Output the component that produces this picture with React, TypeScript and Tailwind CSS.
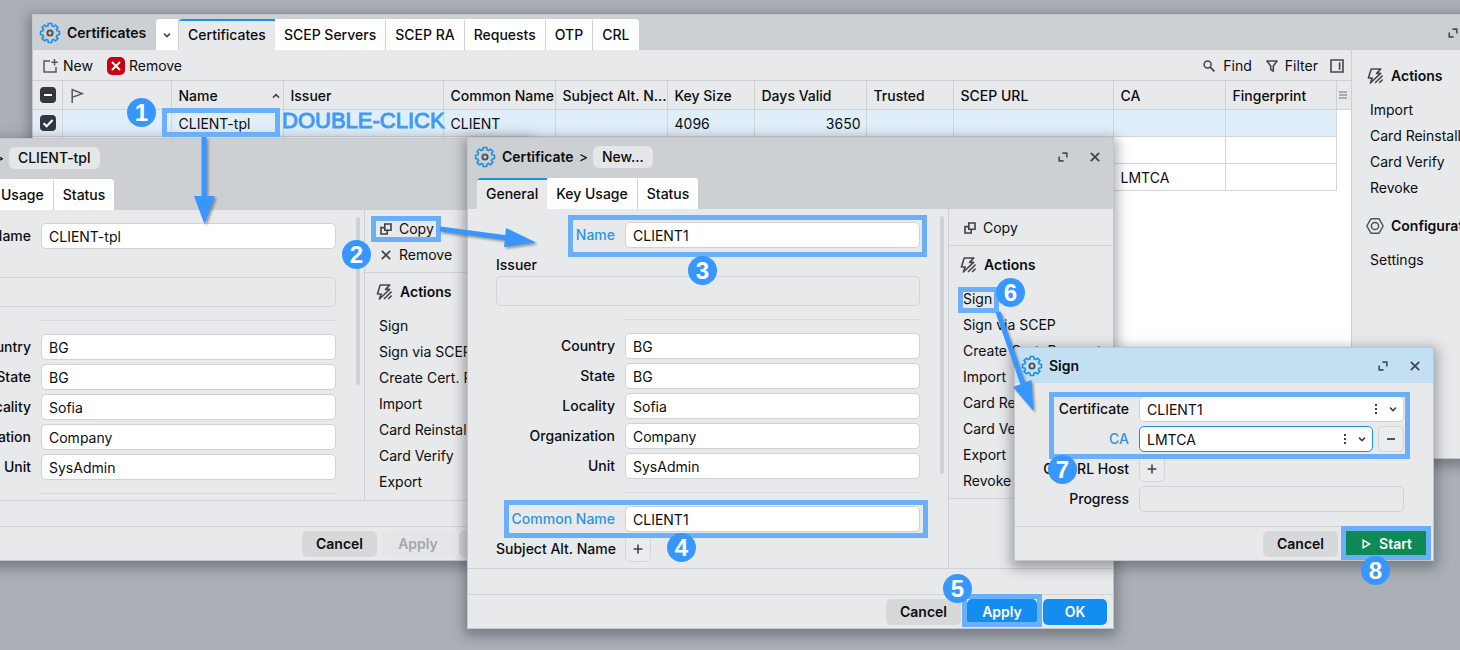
import React from 'react';
import type { ReactNode } from 'react';

type IconProps = { className?: string };

function GearIcon({ className = '' }: IconProps) {
  const teeth = 8;
  const pts: string[] = [];
  for (let i = 0; i < teeth; i++) {
    const a = (i * 2 * Math.PI) / teeth - Math.PI / 2;
    const at = (r: number, d: number) =>
      `${(11 + r * Math.cos(a + d)).toFixed(2)} ${(11 + r * Math.sin(a + d)).toFixed(2)}`;
    pts.push(at(7.4, -0.27), at(9.6, -0.19), at(9.6, 0.19), at(7.4, 0.27));
  }
  return (
    <svg viewBox="0 0 22 22" className={`size-[22px] shrink-0 ${className}`} fill="none" aria-hidden="true">
      <path d={`M${pts.join('L')}Z`} stroke="#1c8fe8" strokeWidth="1.6" strokeLinejoin="round" />
      <circle cx="11" cy="11" r="2.6" stroke="#4b5057" strokeWidth="1.9" />
    </svg>
  );
}

function BoltIcon() {
  return (
    <svg viewBox="0 0 16 16" className="size-4 shrink-0" fill="none" stroke="#44484d" strokeWidth="1.6" aria-hidden="true">
      <path d="M4.2 1h9.600L9.600 5.400h4L3.400 15l1.800-5H1.400Z" strokeLinejoin="round" />
      <path d="M15.600 7.600 8 15M15.600 11.600 12.200 15" />
    </svg>
  );
}

function HexIcon() {
  return (
    <svg viewBox="0 0 18 18" className="-mr-px -ml-px size-[18px] shrink-0" fill="none" stroke="#4b5563" strokeWidth="1.5" aria-hidden="true">
      <path d="M4.9 1.8h8.2L17.2 9l-4.1 7.2H4.9L.8 9Z" strokeLinejoin="round" />
      <circle cx="9" cy="9" r="3.6" />
    </svg>
  );
}

function CopyIcon() {
  return (
    <svg viewBox="0 0 12 12" className="size-3 shrink-0" fill="none" stroke="#3f4347" strokeWidth="1.6" aria-hidden="true">
      <path d="M4.8 1h6.2v6.2H4.8Z" />
      <path d="M4.8 4.6H1V11h6.2V7.2" />
    </svg>
  );
}

function CrossIcon() {
  return (
    <svg viewBox="0 0 10 10" className="size-[10px] shrink-0" stroke="#3f4347" strokeWidth="1.7" aria-hidden="true">
      <path d="m.8.8 8.4 8.4M9.2.8.8 9.2" />
    </svg>
  );
}

function MaximizeIcon() {
  return (
    <svg viewBox="0 0 10 10" className="size-[10px] shrink-0" fill="none" stroke="#4b5057" strokeWidth="1.7" aria-hidden="true">
      <path d="M4.4 1.2h4.4v4.4M1.2 4.4v4.4h4.4" />
    </svg>
  );
}

function Chevron({ up = false }: { up?: boolean }) {
  return (
    <svg viewBox="0 0 8 8" className="size-2 shrink-0" fill="none" stroke="#3f4347" strokeWidth="1.5" aria-hidden="true">
      <path d={up ? 'M1 5.6 4 2.6l3 3' : 'm1 2.6 3 3 3-3'} />
    </svg>
  );
}

function PlusIcon() {
  return (
    <svg viewBox="0 0 10 10" className="size-[10px]" stroke="#3f4347" strokeWidth="1.6" aria-hidden="true">
      <path d="M5 .6v8.8M.6 5h8.8" />
    </svg>
  );
}

function MinusIcon() {
  return (
    <svg viewBox="0 0 10 10" className="size-[10px]" stroke="#3f4347" strokeWidth="1.8" aria-hidden="true">
      <path d="M1 5h8" />
    </svg>
  );
}

const windowClass =
  'absolute flex flex-col overflow-hidden border border-[#c3c7cb] bg-[#e7e9eb] shadow-[0_4px_12px_3px_rgba(40,45,55,0.4)]';

function WindowButtons() {
  return (
    <div className="ml-auto flex items-center gap-[22px] pr-[13px]">
      <button type="button" aria-label="Maximize"><MaximizeIcon /></button>
      <button type="button" aria-label="Close"><CrossIcon /></button>
    </div>
  );
}

function Tabs({ items, active }: { items: string[]; active: string }) {
  return (
    <div role="tablist" className="flex h-[31px] overflow-hidden rounded-t">
      {items.map((t) => (
        <button
          key={t}
          type="button"
          role="tab"
          aria-selected={t === active}
          className={
            t === active
              ? 'border-t-2 border-t-[#1c8fe0] bg-[#e7e9eb] px-[9px] pb-0.5 font-medium'
              : 'border-t-2 border-r border-[#d0d3d6] border-t-white bg-white px-[9px] pb-0.5 font-medium last:border-r-0'
          }
        >
          {t}
        </button>
      ))}
    </div>
  );
}

function SideHeading({ icon, children }: { icon: ReactNode; children: ReactNode }) {
  return (
    <h2 className="mb-0.5 flex h-[38px] items-center gap-2 font-semibold whitespace-nowrap">
      {icon}
      {children}
    </h2>
  );
}

function SideItems({ items }: { items: string[] }) {
  return (
    <ul className="pb-1">
      {items.map((t) => (
        <li key={t}>
          <button type="button" className="block h-[26px] px-[3px] whitespace-nowrap">{t}</button>
        </li>
      ))}
    </ul>
  );
}

const fieldClass = 'h-[26px] w-full min-w-0 rounded-[5px] border border-[#d0d3d6] bg-white px-[7px]';

function Field({ id, label, value, blue = false }: { id: string; label: string; value: string; blue?: boolean }) {
  return (
    <div className="grid grid-cols-[119px_1fr] items-center gap-[10px]">
      <label htmlFor={id} className={blue ? 'text-right font-medium whitespace-nowrap text-[#2b95e6]' : 'text-right font-medium whitespace-nowrap'}>
        {label}
      </label>
      <input id={id} type="text" defaultValue={value} className={fieldClass} />
    </div>
  );
}

function SquareButton({ label, children }: { label: string; children: ReactNode }) {
  return (
    <button type="button" aria-label={label} className="flex size-[26px] shrink-0 items-center justify-center rounded-[5px] border border-[#d3d6d9] bg-[#ebecee]">
      {children}
    </button>
  );
}

type CertWindowProps = {
  id: string;
  crumb: string;
  name: string;
  commonName: string;
  edited?: boolean;
  place: string;
  bodyHeight: string;
  thumb: string;
};

function CertificateWindow({ id, crumb, name, commonName, edited = false, place, bodyHeight, thumb }: CertWindowProps) {
  return (
    <section className={`${windowClass} ${place}`} aria-label={`Certificate ${crumb}`}>
      <header className="bg-[#cdd0d3]">
        <div className="mb-[3px] flex h-[37px] items-center pl-1.5">
          <GearIcon />
          <span className="ml-1.5 font-semibold">Certificate</span>
          <span className="mx-[5px]">&gt;</span>
          <span className="rounded-md bg-[#e4e6e8] px-[9px] leading-[22px] font-medium">{crumb}</span>
          <WindowButtons />
        </div>
        <div className="flex px-[9px]">
          <Tabs items={['General', 'Key Usage', 'Status']} active="General" />
        </div>
      </header>
      <div className={`flex overflow-hidden ${bodyHeight}`}>
        <form className="flex min-w-0 flex-1 flex-col pt-[13px] pl-7">
          <div className="flex flex-1">
            <div className="flex-1">
              <Field id={`${id}-name`} label="Name" value={name} blue={edited} />
              <label htmlFor={`${id}-issuer`} className="mt-[7px] block h-5 font-medium">Issuer</label>
              <input id={`${id}-issuer`} type="text" readOnly className="mt-px block h-[30px] w-full rounded-[5px] border border-[#d3d6d9] bg-transparent px-2" />
              <hr className="my-[13px] ml-[128px] border-[#d6d9dc]" />
              <div className="flex flex-col gap-1">
                <Field id={`${id}-country`} label="Country" value="BG" />
                <Field id={`${id}-state`} label="State" value="BG" />
                <Field id={`${id}-locality`} label="Locality" value="Sofia" />
                <Field id={`${id}-org`} label="Organization" value="Company" />
                <Field id={`${id}-unit`} label="Unit" value="SysAdmin" />
              </div>
              <hr className="my-[13px] ml-[128px] border-[#d6d9dc]" />
              <div className="flex flex-col gap-1">
                <Field id={`${id}-cn`} label="Common Name" value={commonName} blue={edited} />
                <div className="grid grid-cols-[119px_1fr] items-center gap-[10px]">
                  <span className="text-right font-medium whitespace-nowrap">Subject Alt. Name</span>
                  <SquareButton label="Add subject alternative name"><PlusIcon /></SquareButton>
                </div>
              </div>
            </div>
            <div className="-mt-1.5 ml-5 w-2">
              <div className={`w-1 rounded-full bg-[#cfd2d5] ${thumb}`} />
            </div>
          </div>
        </form>
        <aside className="w-[165px] shrink-0 border-l border-[#cdd1d4]">
          <div className="border-b border-[#d0d3d6] pt-1.5 pb-1 pl-[15px]">
            <button type="button" className="flex h-[26px] items-center gap-[7px]"><CopyIcon />Copy</button>
            {!edited && (
              <button type="button" className="flex h-[26px] items-center gap-2 pl-px"><CrossIcon />Remove</button>
            )}
          </div>
          <div className="border-b border-[#d0d3d6] pl-[11px]">
            <SideHeading icon={<BoltIcon />}>Actions</SideHeading>
            <SideItems items={['Sign', 'Sign via SCEP', 'Create Cert. Request', 'Import', 'Card Reinstall', 'Card Verify', 'Export', 'Revoke']} />
          </div>
        </aside>
      </div>
      <div className="h-[26px] border-t border-[#d0d3d6]" />
      <footer className="flex h-[34px] items-center justify-end gap-1.5 border-t border-[#d0d3d6] pr-1.5">
        <button type="button" className="h-[26px] w-[75px] rounded-[5px] bg-[#d6d8da] font-semibold">Cancel</button>
        {edited ? (
          <>
            <button type="button" className="h-[26px] w-[70px] rounded-[5px] bg-[#148df0] font-semibold text-white">Apply</button>
            <button type="button" className="h-[26px] w-16 rounded-[5px] bg-[#148df0] font-semibold text-white">OK</button>
          </>
        ) : (
          <>
            <button type="button" disabled className="h-[26px] w-[70px] rounded-[5px] bg-[#e4e6e8] font-semibold text-[#a4a7aa]">Apply</button>
            <button type="button" disabled className="h-[26px] w-16 rounded-[5px] bg-[#d6d8da] font-semibold text-[#a4a7aa]">OK</button>
          </>
        )}
      </footer>
    </section>
  );
}

const columns: { title: string; width: string }[] = [
  { title: 'Name', width: 'w-[112px]' },
  { title: 'Issuer', width: 'w-[160px]' },
  { title: 'Common Name', width: 'w-[112px]' },
  { title: 'Subject Alt. N...', width: 'w-[112px]' },
  { title: 'Key Size', width: 'w-[87px]' },
  { title: 'Days Valid', width: 'w-[112px]' },
  { title: 'Trusted', width: 'w-[87px]' },
  { title: 'SCEP URL', width: 'w-[160px]' },
  { title: 'CA', width: 'w-[112px]' },
  { title: 'Fingerprint', width: 'w-[111px]' },
];

const rows: string[][] = [
  ['CLIENT-tpl', '', 'CLIENT', '', '4096', '3650', '', '', '', ''],
  ['', '', '', '', '', '', '', '', '', ''],
  ['', '', '', '', '', '', '', '', 'LMTCA', ''],
];

function CertificatesWindow() {
  return (
    <section className={`${windowClass} top-[14px] right-[-44px] left-8 min-h-[445px]`} aria-label="Certificates">
      <header className="flex h-[35px] bg-[#cdd0d3]">
        <div className="flex w-[123px] items-center pl-1.5">
          <GearIcon />
          <span className="ml-1.5 font-semibold">Certificates</span>
        </div>
        <div className="mt-1 flex">
          <button type="button" aria-label="More tabs" className="flex w-[23px] items-center justify-center rounded-tl border-r border-[#d0d3d6] bg-white">
            <Chevron />
          </button>
          <Tabs items={['Certificates', 'SCEP Servers', 'SCEP RA', 'Requests', 'OTP', 'CRL']} active="Certificates" />
        </div>
        <WindowButtons />
      </header>
      <div className="flex flex-1">
        <div className="flex min-w-0 flex-1 flex-col">
          <div className="flex h-[30px] items-center pt-0.5 pl-[10px]">
            <button type="button" className="flex items-center gap-[5px]">
              <svg viewBox="0 0 15 14" className="h-[14px] w-[15px]" fill="none" stroke="#55595e" strokeWidth="1.5" aria-hidden="true">
                <path d="M7 2H1v11h12V8" />
                <path d="M11.500 0v6.400M8.300 3.200h6.400" />
              </svg>
              New
            </button>
            <button type="button" className="ml-[14px] flex items-center gap-1">
              <svg viewBox="0 0 18 18" className="size-[18px]" aria-hidden="true">
                <rect width="18" height="18" rx="5" fill="#c8000f" />
                <path d="m5 5 8 8m0-8-8 8" stroke="#fff" strokeWidth="2" />
              </svg>
              Remove
            </button>
            <div className="ml-auto flex items-center pr-[7px]">
              <button type="button" className="flex items-center gap-2">
                <svg viewBox="0 0 12 12" className="size-3" fill="none" stroke="#44484d" strokeWidth="1.5" aria-hidden="true">
                  <circle cx="4.6" cy="4.6" r="3.5" />
                  <path d="m7.2 7.2 4.2 4.2" strokeWidth="1.8" />
                </svg>
                Find
              </button>
              <button type="button" className="ml-[14px] flex items-center gap-[7px]">
                <svg viewBox="0 0 12 12" className="size-3" fill="none" stroke="#44484d" strokeWidth="1.6" aria-hidden="true">
                  <path d="M1 1h10L7.3 6v5.200L4.700 9.600V6Z" strokeLinejoin="round" />
                </svg>
                Filter
              </button>
              <button type="button" aria-label="Toggle panel" className="ml-3">
                <svg viewBox="0 0 14 14" className="size-[14px]" fill="none" stroke="#44484d" strokeWidth="1.6" aria-hidden="true">
                  <path d="M1 1h12v12H1ZM9.600 3.200v7.600" />
                </svg>
              </button>
            </div>
          </div>
          <div className="flex-1 bg-white">
            <table className="w-full table-fixed border-collapse text-left">
              <thead>
                <tr className="h-[29px] bg-[#e7e9eb]">
                  <th className="w-[29px] border-y border-r border-[#cdd1d4] p-0">
                    <button type="button" aria-label="Clear selection" className="ml-[7px] flex size-4 items-center justify-center rounded bg-[#33383e]">
                      <span className="h-0.5 w-2 bg-white" />
                    </button>
                  </th>
                  <th className="w-[109px] border border-[#cdd1d4] p-0" aria-label="Flags">
                    <svg viewBox="0 0 13 15" className="ml-2 h-[15px] w-[13px]" fill="none" stroke="#55595e" strokeWidth="1.5" aria-hidden="true">
                      <path d="M1.200 15V1.600L11 5.600 1.200 9.400" />
                    </svg>
                  </th>
                  {columns.map((c) => (
                    <th key={c.title} className={`${c.width} border border-[#cdd1d4] p-0 pt-0.5 pl-[7px] font-medium`}>
                      <span className="flex items-center">
                        <span className="min-w-0 flex-1 whitespace-nowrap">{c.title}</span>
                        {c.title === 'Name' && <span className="pr-[3px]"><Chevron up /></span>}
                      </span>
                    </th>
                  ))}
                  <th className="border-y border-[#cdd1d4] p-0" aria-label="Columns">
                    <svg viewBox="0 0 8 8" className="ml-[2px] size-2" stroke="#6b7075" strokeWidth="1.2" aria-hidden="true">
                      <path d="M0 1h8M0 4h8M0 7h8" />
                    </svg>
                  </th>
                </tr>
              </thead>
              <tbody>
                {rows.map((r, i) => (
                  <tr key={i} className={i === 0 ? 'h-[27px] bg-[#e0eef9]' : 'h-[27px] bg-white'}>
                    <td className="border-r border-b border-[#d2d6d9] p-0">
                      {i === 0 && (
                        <span className="ml-[7px] flex">
                          <input type="checkbox" defaultChecked aria-label="Select CLIENT-tpl" className="size-4 appearance-none rounded bg-[#33383e]" />
                          <svg viewBox="0 0 16 16" className="pointer-events-none -ml-4 size-4" fill="none" stroke="#fff" strokeWidth="2" aria-hidden="true">
                            <path d="m3.600 8.200 3 3 6-6.200" />
                          </svg>
                        </span>
                      )}
                    </td>
                    <td className="border border-t-0 border-[#d2d6d9] p-0" />
                    {r.map((v, j) => (
                      <td key={j} className={j === 5 ? 'border border-t-0 border-[#d2d6d9] p-0 pt-0.5 pr-[5px] text-right' : 'border border-t-0 border-[#d2d6d9] p-0 pt-0.5 pl-[7px]'}>
                        {v}
                      </td>
                    ))}
                    <td className="bg-white p-0" />
                  </tr>
                ))}
              </tbody>
            </table>
          </div>
        </div>
        <aside className="flex w-[152px] shrink-0 flex-col gap-0.5 border-l border-[#cdd1d4] pt-[7px] pl-[15px]">
          <div>
            <SideHeading icon={<BoltIcon />}>Actions</SideHeading>
            <SideItems items={['Import', 'Card Reinstall', 'Card Verify', 'Revoke']} />
          </div>
          <div>
            <SideHeading icon={<HexIcon />}>Configuration</SideHeading>
            <SideItems items={['Settings']} />
          </div>
        </aside>
      </div>
    </section>
  );
}

function Combo({ id, value, focused = false }: { id: string; value: string; focused?: boolean }) {
  return (
    <div className={focused ? 'flex h-[26px] min-w-0 flex-1 items-center rounded-[5px] border border-[#1c8fe0] bg-white pr-[6px]' : 'flex h-[26px] min-w-0 flex-1 items-center rounded-[5px] border border-[#d0d3d6] bg-white pr-[6px]'}>
      <select id={id} defaultValue={value} className="h-full min-w-0 flex-1 appearance-none bg-transparent pt-0.5 pr-2 pl-[7px]">
        <option>{value}</option>
      </select>
      <svg viewBox="0 0 4 12" className="mr-[11px] h-3 w-1" fill="#3f4347" aria-hidden="true">
        <path d="M1 1h2v2H1ZM1 5h2v2H1ZM1 9h2v2H1Z" />
      </svg>
      <Chevron />
    </div>
  );
}

function SignWindow() {
  return (
    <section className={`${windowClass} top-[347px] left-[1014px] w-[420px]`} aria-label="Sign">
      <header className="flex h-[35px] items-center bg-[#c3e0f3] pl-1.5">
        <GearIcon />
        <span className="ml-1.5 font-semibold">Sign</span>
        <WindowButtons />
      </header>
      <form className="flex flex-col gap-1 pt-[13px] pr-[29px] pb-[14px] pl-6">
        <div className="flex items-center gap-[10px]">
          <label htmlFor="sign-cert" className="w-[90px] text-right font-medium">Certificate</label>
          <Combo id="sign-cert" value="CLIENT1" />
        </div>
        <div className="flex items-center gap-[10px]">
          <label htmlFor="sign-ca" className="w-[90px] text-right font-medium text-[#2b95e6]">CA</label>
          <div className="flex min-w-0 flex-1 gap-[5px]">
            <Combo id="sign-ca" value="LMTCA" focused />
            <SquareButton label="Remove CA"><MinusIcon /></SquareButton>
          </div>
        </div>
        <div className="flex items-center gap-[10px]">
          <span className="w-[90px] text-right font-medium whitespace-nowrap">CA CRL Host</span>
          <SquareButton label="Add CRL host"><PlusIcon /></SquareButton>
        </div>
        <div className="flex items-center gap-[10px]">
          <label htmlFor="sign-progress" className="w-[90px] text-right font-medium">Progress</label>
          <input id="sign-progress" type="text" readOnly className="h-[26px] min-w-0 flex-1 rounded-[5px] border border-[#d0d3d6] bg-transparent px-2" />
        </div>
      </form>
      <footer className="flex h-[34px] items-center justify-end gap-2 border-t border-[#d0d3d6] pr-[7px]">
        <button type="button" className="h-[26px] w-[75px] rounded-[5px] bg-[#d6d8da] font-semibold">Cancel</button>
        <button type="button" className="flex h-[26px] w-20 items-center justify-center gap-2 bg-[#0d8a56] pl-0.5 font-semibold text-white">
          <svg viewBox="0 0 9 10" className="h-[10px] w-[9px]" fill="none" stroke="#fff" strokeWidth="1.5" aria-hidden="true">
            <path d="M1.200 1.200 7.600 5 1.200 8.800Z" />
          </svg>
          Start
        </button>
      </footer>
    </section>
  );
}

const frames = [
  'top-[108px] left-[162px] h-[29px] w-[118px]',
  'top-[216px] left-[371px] h-[26px] w-[70px]',
  'top-[215px] left-[568px] h-[42px] w-[359px]',
  'top-[500px] left-[504px] h-[38px] w-[424px]',
  'top-[594px] left-[962px] h-[33px] w-[80px]',
  'top-[287px] left-[958px] h-[26px] w-[41px]',
  'top-[392px] left-[1049px] h-[67px] w-[361px]',
  'top-[526px] left-[1341px] h-[34px] w-[90px]',
];

const badges = [
  'top-[98px] left-[127px]',
  'top-[240px] left-[342px]',
  'top-[256px] left-[688px]',
  'top-[533px] left-[667px]',
  'top-[574px] left-[943px]',
  'top-[278px] left-[996px]',
  'top-[455px] left-[1048px]',
  'top-[556px] left-[1361px]',
];

function Annotations() {
  return (
    <div className="pointer-events-none absolute inset-0">
      {frames.map((f) => (
        <div key={f} className={`absolute border-5 border-[#6aaff8] ${f}`} />
      ))}
      <svg className="absolute top-0 left-0 h-[650px] w-[1460px] drop-shadow-[2px_2px_1px_rgba(60,60,60,0.45)]" viewBox="0 0 1460 650" fill="#3797ff" stroke="#3797ff" aria-hidden="true">
        <path d="M204 137v62M440 229l68 9M998 312l25 72" strokeWidth="5" />
        <path d="M194 196h21l-10.500 28ZM506 228l30 14.500-32 4.500ZM1013 387l18.500-7 2 31Z" stroke="none" />
      </svg>
      <p className="absolute top-[108px] left-[282px] font-['Liberation_Sans',sans-serif] text-[22px] leading-[26px] whitespace-nowrap text-[#3f9af6] [-webkit-text-stroke:1px_#3f9af6]">
        DOUBLE-CLICK
      </p>
      {badges.map((b, i) => (
        <span key={b} className={`absolute flex size-[29px] items-center justify-center rounded-full bg-[#3797ff] font-['Liberation_Sans',sans-serif] text-[24px] leading-none font-bold text-white ${b}`}>
          {i + 1}
        </span>
      ))}
    </div>
  );
}

export default function App() {
  return (
    <main className="relative min-h-screen overflow-hidden bg-[#abb0b6] font-['Inter',sans-serif] text-[14px] leading-5 text-[#0c0d0e]">
      <CertificatesWindow />
      <CertificateWindow
        id="tpl"
        crumb="CLIENT-tpl"
        name="CLIENT-tpl"
        commonName="CLIENT"
        place="top-[138px] left-[-117px] w-[647px]"
        bodyHeight="h-[290px]"
        thumb="h-[168px]"
      />
      <CertificateWindow
        id="new"
        crumb="New..."
        name="CLIENT1"
        commonName="CLIENT1"
        edited
        place="top-[137px] left-[467px] w-[647px]"
        bodyHeight="h-[359px]"
        thumb="h-[258px]"
      />
      <SignWindow />
      <Annotations />
    </main>
  );
}
